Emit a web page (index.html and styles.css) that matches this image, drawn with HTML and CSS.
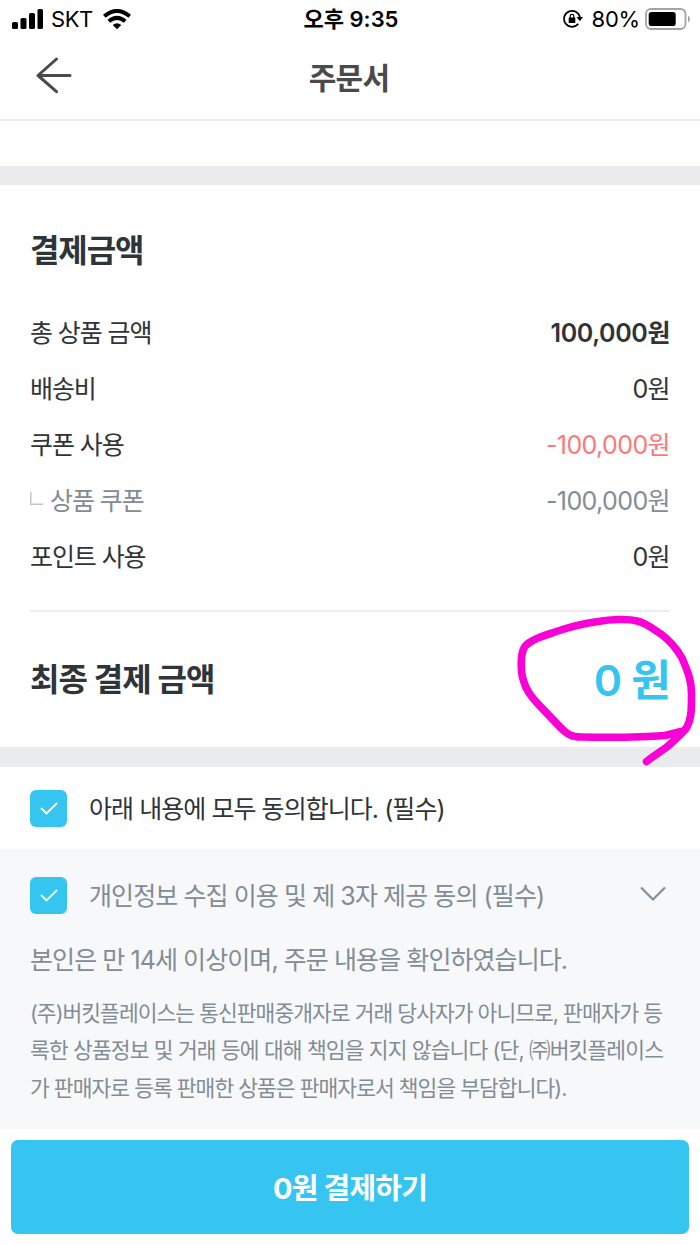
FILE: index.html
```html
<!DOCTYPE html>
<html lang="ko">
<head>
<meta charset="utf-8">
<title>주문서</title>
<link rel="stylesheet" href="styles.css">
</head>
<body>
<main class="screen">
  <header class="status">
    <div class="status-left">
      <svg class="signal" width="32" height="21" viewBox="0 0 32 21"><rect x="0" y="13" width="6" height="7" rx="1.6"/><rect x="8.5" y="9" width="6" height="11" rx="1.6"/><rect x="17" y="4" width="6" height="16" rx="1.6"/><rect x="25.500" y="0" width="5.500" height="20" rx="1.600"/></svg>
      <span class="carrier">SKT</span>
      <svg class="wifi" width="28" height="21" viewBox="0 0 28 21"><g fill="none" stroke="#000" stroke-width="4"><path d="M1.300 7.300Q14 -3.300 26.700 7.300"/><path d="M5.800 12.300Q14 5.300 22.200 12.300"/></g><path d="M9.700 16Q14 12.600 18.300 16L14 20.300Z"/></svg>
    </div>
    <span class="time">오후 9:35</span>
    <div class="status-right">
      <svg class="rotation" width="20" height="20" viewBox="0 0 20 20"><path d="M15.300 14.800A8 8 0 1 1 17 9" fill="none" stroke="#000" stroke-width="1.700"/><path d="M13.500 8h6.500l-3.200 4.200z"/><rect x="5.700" y="8.500" width="6.600" height="5.500" rx=".6"/><path d="M7.200 9V7.200a1.800 1.800 0 0 1 3.600 0V9" fill="none" stroke="#000" stroke-width="1.200"/></svg>
      <span class="percent">80%</span>
      <svg class="battery" width="45" height="22" viewBox="0 0 45 22"><rect x="1" y="1" width="39.500" height="20" rx="5" fill="#fff" stroke="#a3a3a3" stroke-width="1.800"/><rect x="3.700" y="4" width="27" height="14" rx="2.800"/><path d="M43 7.500q2 1 2 3.500t-2 3.500z" fill="#a3a3a3"/></svg>
    </div>
  </header>
  <nav class="nav">
    <svg class="back" width="36" height="37" viewBox="0 0 36 37"><path d="M34 18.500H2M20.500 2L2 18.500l18.500 16.200" fill="none" stroke="#4a4a4a" stroke-width="3" stroke-linecap="round" stroke-linejoin="round"/></svg>
    <h1 class="nav-title">주문서</h1>
  </nav>
  <div class="spacer"></div>
  <div class="band"></div>
  <section class="payment">
    <h2 class="heading">결제금액</h2>
    <div class="rows">
      <div class="row"><span>총 상품 금액</span><span class="amount bold">100,000원</span></div>
      <div class="row"><span>배송비</span><span class="amount">0원</span></div>
      <div class="row"><span>쿠폰 사용</span><span class="amount red">-100,000원</span></div>
      <div class="row muted"><span class="sub"><svg class="branch" width="13" height="13" viewBox="0 0 13 13"><path d="M.75 0v12.200H13" fill="none" stroke="#c2c8cc" stroke-width="1.500"/></svg>상품 쿠폰</span><span class="amount">-100,000원</span></div>
      <div class="row"><span>포인트 사용</span><span class="amount">0원</span></div>
    </div>
    <div class="total">
      <span class="total-label">최종 결제 금액</span>
      <span class="total-value">0 원</span>
      <svg class="scribble" width="190" height="160" viewBox="510 610 190 160"><path d="M646.500 761.500C651 757.500 661 751.500 668 746C677 738 684 732 687 727C691 719 691.500 713 691.500 696C692 680 687 670 682 658C677 649 669 640 661 634C652 628 644 622 637 621C628 618.500 610 619.500 598 621.500C582 623.500 566 628 552 633C539 637 527 642 524 648C520 656 521 672 523 679C526 691 532 697 538 704L560 727C567 734 571 737 581 737C610 737.500 640 737.500 665 735.500L681 731.500" fill="none" stroke="#f900d7" stroke-width="7.600" stroke-linecap="round" stroke-linejoin="round"/></svg>
    </div>
  </section>
  <div class="band band-lower"></div>
  <section class="agree-all">
    <span class="check"><svg width="18" height="13" viewBox="0 0 18 13"><path d="M1 6l5.500 5.500L17 1" fill="none" stroke="#fff" stroke-width="1.800"/></svg></span>
    <span class="agree-text">아래 내용에 모두 동의합니다. (필수)</span>
  </section>
  <section class="terms">
    <div class="terms-row">
      <span class="check"><svg width="18" height="13" viewBox="0 0 18 13"><path d="M1 6l5.500 5.500L17 1" fill="none" stroke="#fff" stroke-width="1.800"/></svg></span>
      <span class="agree-text terms-text">개인정보 수집 이용 및 제 3자 제공 동의 (필수)</span>
      <svg class="chevron" width="26" height="16" viewBox="0 0 26 16"><path d="M1 1.500l12 12 12-12" fill="none" stroke="#858e96" stroke-width="2.200"/></svg>
    </div>
    <p class="confirm">본인은 만 14세 이상이며, 주문 내용을 확인하였습니다.</p>
    <p class="notice">(주)버킷플레이스는 통신판매중개자로 거래 당사자가 아니므로, 판매자가 등<br><span class="notice-wide">록한 상품정보 및 거래 등에 대해 책임을 지지 않습니다 (단, ㈜버킷플레이스</span><br>가 판매자로 등록 판매한 상품은 판매자로서 책임을 부담합니다).</p>
  </section>
  <footer class="footer"><button class="pay">0원 결제하기</button></footer>
</main>
</body>
</html>
```
FILE: styles.css
```css
* { box-sizing: border-box; }
body { margin: 0; background: #fff; }
.screen {
  width: 700px; height: 1245px; overflow: hidden;
  display: flex; flex-direction: column;
  font-family: Inter, "Noto Sans CJK KR", sans-serif;
  font-size: 25px; letter-spacing: -1.1px; color: #2f3438;
  white-space: nowrap;
}
.screen > * { flex-shrink: 0; }
svg { display: block; flex-shrink: 0; }
h1, h2, p { margin: 0; }
.status {
  height: 38px; padding: 0 10px 0 12px;
  display: grid; grid-template-columns: 1fr auto 1fr; align-items: center;
  color: #000; font-size: 22px; letter-spacing: 0; line-height: 38px;
}
.status-left, .status-right { display: flex; align-items: center; height: 38px; }
.status-right { justify-content: flex-end; }
.carrier { margin-left: 7px; letter-spacing: -.4px; }
.wifi { margin-left: 10px; }
.time { font-weight: 600; font-size: 22px; }
.percent { margin: 0 5px 0 9px; letter-spacing: -.2px; }
.nav {
  height: 83px; border-bottom: 2px solid #ececec; padding: 0 36px;
  display: grid; grid-template-columns: 1fr auto 1fr; align-items: center;
}
.back { margin-bottom: 6px; }
.nav-title { margin: 0 2px 2px 0; font-size: 30px; line-height: 40px; font-weight: 700; letter-spacing: -.7px; color: #4a4a4a; }
.spacer { height: 45px; }
.band { height: 19px; background: #eaebed; }
.band-lower { height: 20px; }
.payment { height: 562px; padding: 42px 30px 0; }
.heading { font-size: 32px; line-height: 48px; letter-spacing: -1.1px; }
.rows { margin-top: 30px; height: 307px; border-bottom: 2px solid #ececec; }
.row { display: flex; justify-content: space-between; align-items: center; height: 56px; line-height: 56px; }
.amount { letter-spacing: -.6px; }
.bold { font-weight: 600; letter-spacing: -.4px; }
.red { color: #ff7777; }
.muted { color: #828c94; }
.sub { display: flex; align-items: center; gap: 7px; }
.branch { margin-bottom: 6px; }
.total { position: relative; display: flex; justify-content: space-between; align-items: center; height: 130px; }
.total-label { font-size: 32px; font-weight: 700; letter-spacing: -.9px; }
.total-value { font-size: 43px; font-weight: 600; color: #35c5f0; letter-spacing: -.8px; }
.scribble { position: absolute; right: -30px; top: -2px; z-index: 1; }
.agree-all { height: 82px; padding: 0 30px; display: flex; align-items: center; }
.check { width: 37px; height: 37px; border-radius: 6px; background: #35c5f0; display: grid; place-items: center; }
.agree-text { margin: 0 0 2px 22px; letter-spacing: -.95px; }
.terms-text { margin-bottom: 4px; letter-spacing: -.92px; }
.terms { height: 280px; background: #f7f8fa; padding: 28px 30px 0; color: #828c94; }
.terms-row { display: flex; align-items: center; height: 37px; }
.chevron { margin: 0 4px 4px auto; }
.confirm { margin-top: 27px; line-height: 38px; letter-spacing: -.93px; }
.notice { margin-top: 16px; font-size: 21.5px; letter-spacing: -.98px; line-height: 37.3px; }
.notice-wide { letter-spacing: -.87px; }
.footer { padding: 11px 11px 0; }
.pay {
  display: block; width: 678px; height: 94px; border: 0; border-radius: 7px;
  background: #35c5f0; color: #fff; font: 700 29px Inter, "Noto Sans CJK KR", sans-serif; letter-spacing: -.8px;
  padding: 0 0 2px;
}
```
